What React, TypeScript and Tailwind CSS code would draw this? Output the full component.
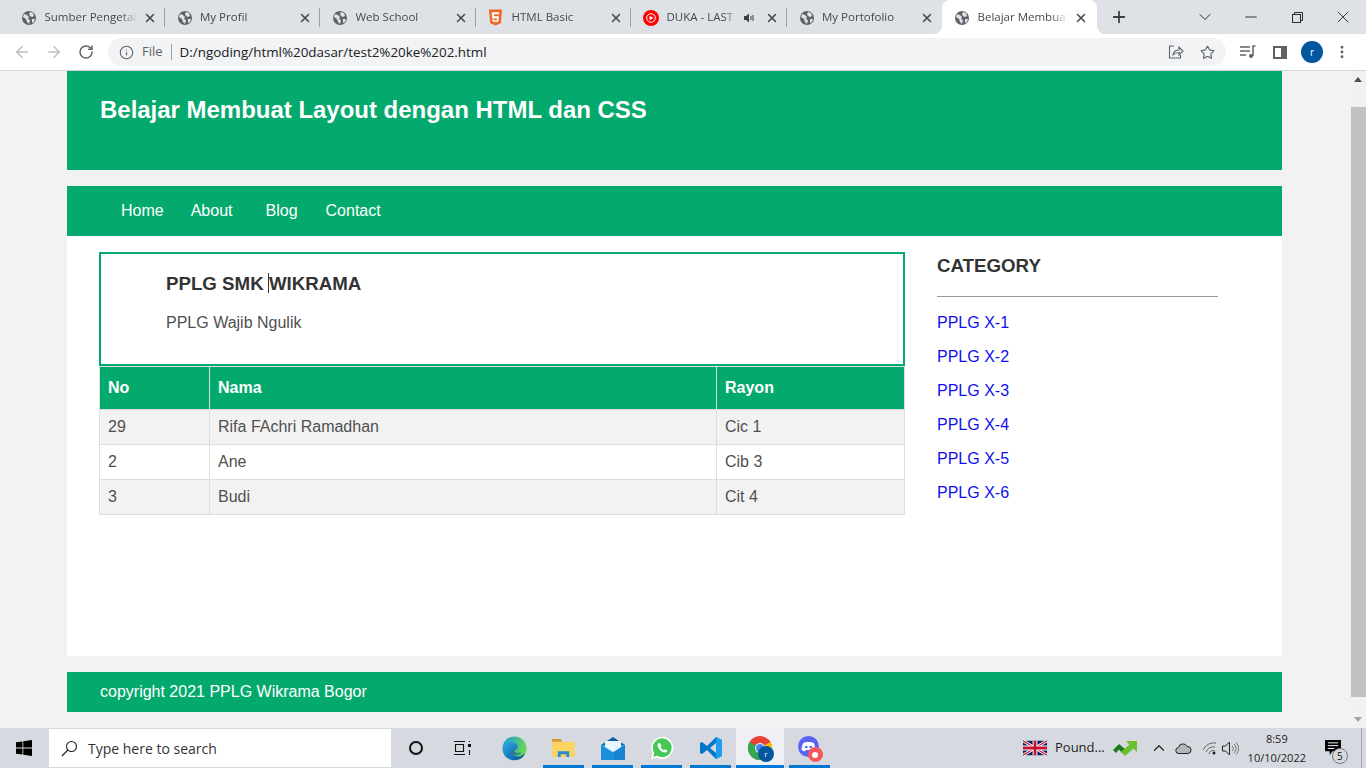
import { X, Plus, ArrowLeft, ArrowRight, RotateCw, Info, Star, Minus, ChevronDown, ChevronUp, MoreVertical } from "lucide-react";

const ui = "font-['Open_Sans',sans-serif]";

function Globe() {
    return (
        <svg width="16" height="16" viewBox="0 0 16 16" className="shrink-0">
            <circle cx="8" cy="8" r="7" fill="#5f6368" />
            <path d="M3 4l3 1 2 2-1 2 2 1-1 4-2-2-1-3-3-2zM9 2l3 1 1 3-2 1-2-1-1-2zM11 9l3 0-1 3-2 1z" fill="#dee1e6" />
        </svg>
    );
}

function Html5() {
    return (
        <svg width="15" height="17" viewBox="0 0 16 17" className="mr-[1.5px] shrink-0">
            <path d="M1 0h14l-1.300 14.500L8 17l-5.700-2.500z" fill="#f1662a" />
            <path d="M4 3h8l-.2 2H6.300l.2 2.200h5.100l-.5 5.300L8 13.500l-3.100-1-.2-2.200h1.800l.1 1 1.400.4 1.400-.4.2-1.800H4.500z" fill="#fff" />
        </svg>
    );
}

function YtMusic() {
    return (
        <svg width="16" height="16" viewBox="0 0 16 16" className="shrink-0">
            <circle cx="8" cy="8" r="8" fill="#f00" />
            <circle cx="8" cy="8" r="4.300" fill="none" stroke="#fff" strokeWidth="1" />
            <path d="M6.500 5.800L10.500 8l-4 2.200z" fill="#fff" />
        </svg>
    );
}

function Speaker() {
    return (
        <svg width="12" height="12" viewBox="0 0 12 12" className="shrink-0">
            <path d="M1 4h2l3-2.500v9L3 8H1z" fill="#3c4043" />
            <path d="M8 4v4M10 3v6" stroke="#3c4043" strokeWidth="1" />
        </svg>
    );
}

type TabProps = { title: string; icon?: React.ReactNode; audio?: boolean; sep?: boolean };

function Tab({ title, icon, audio, sep = true }: TabProps) {
    return (
        <div className="relative flex h-[34px] w-[155.5px] shrink-0 items-center pl-[12px] pr-[8px] pt-[1px]">
            {icon ?? <Globe />}
            <span className={`mb-[1px] ml-[7.5px] min-w-0 flex-1 overflow-hidden whitespace-nowrap text-[11.5px] text-[#45494e] ${ui} [mask-image:linear-gradient(90deg,#000_82%,transparent)]`}>{title}</span>
            {audio && <span className="ml-[6px] mr-[4px]"><Speaker /></span>}
            <X size={14} strokeWidth={2.6} className="ml-[6px] shrink-0 text-[#45494e]" />
            {sep && <span className="absolute right-0 top-[8px] h-[19px] w-px bg-[#9aa0a6]" />}
        </div>
    );
}

function TabStrip() {
    return (
        <div className="flex h-[34px] shrink-0 items-center bg-[#dee1e6] pl-[9px]">
            <Tab title="Sumber Pengetahuan" />
            <Tab title="My Profil" />
            <Tab title="Web School" />
            <Tab title="HTML Basic" icon={<Html5 />} />
            <Tab title="DUKA - LAST CHILD" icon={<YtMusic />} audio />
            <Tab title="My Portofolio" sep={false} />
            <div className="relative flex h-[34px] w-[155px] shrink-0 items-center rounded-t-[8px] bg-white pl-[12px] pr-[9px] pt-[1px]">
                <span className="absolute bottom-0 left-[-8px] h-[8px] w-[8px] bg-white"><span className="block h-full w-full rounded-br-[8px] bg-[#dee1e6]" /></span>
                <span className="absolute bottom-0 right-[-8px] h-[8px] w-[8px] bg-white"><span className="block h-full w-full rounded-bl-[8px] bg-[#dee1e6]" /></span>
                <Globe />
                <span className={`mb-[1px] ml-[7.5px] min-w-0 flex-1 overflow-hidden whitespace-nowrap text-[11.5px] text-[#45494e] ${ui} [mask-image:linear-gradient(90deg,#000_82%,transparent)]`}>Belajar Membuat Layout</span>
                <X size={14} strokeWidth={2.6} className="ml-[6px] shrink-0 text-[#45494e]" />
            </div>
            <Plus size={18} strokeWidth={2.4} className="ml-[13px] text-[#3c4043]" />
            <div className="ml-auto flex items-center text-[#2b2e31]">
                <div className="flex w-[46px] justify-center"><ChevronDown size={20} strokeWidth={1.2} /></div>
                <div className="flex w-[46px] justify-center"><Minus size={18} strokeWidth={1.3} /></div>
                <div className="flex w-[46px] justify-center">
                    <svg width="11" height="11" viewBox="0 0 11 11" fill="none" stroke="#2b2e31">
                        <rect x=".5" y="2.500" width="8" height="8" />
                        <path d="M2.500 2.500v-2h8v8h-2" />
                    </svg>
                </div>
                <div className="flex w-[46px] justify-center"><X size={20} strokeWidth={1.1} /></div>
            </div>
        </div>
    );
}

function Toolbar() {
    return (
        <div className="flex h-[37px] shrink-0 items-center border-b border-[#d5d6d8] bg-white">
            <ArrowLeft size={18} strokeWidth={2} className="ml-[13px] text-[#bdc0c4]" />
            <ArrowRight size={18} strokeWidth={2} className="ml-[14px] text-[#bdc0c4]" />
            <RotateCw size={16} strokeWidth={2.2} className="ml-[15px] text-[#5f6368]" />
            <div className="ml-[14px] flex h-[28px] w-[1118px] shrink-0 items-center rounded-full bg-[#f1f3f4] pl-[11px]">
                <Info size={15} strokeWidth={1.8} className="text-[#5f6368]" />
                <span className={`ml-[8px] text-[13px] text-[#5f6368] ${ui}`}>File</span>
                <span className="ml-[8px] h-[16px] w-px bg-[#9aa0a6]" />
                <span className={`ml-[8px] text-[13.4px] text-[#202124] ${ui}`}>D:/ngoding/html%20dasar/test2%20ke%202.html</span>
                <svg width="16" height="16" viewBox="0 0 16 16" fill="none" stroke="#5f6368" strokeWidth="1.100" className="ml-auto mr-[8px]">
                    <path d="M6 2H1.500v12h11v-3" />
                    <path d="M5 11c.5-3.500 3-5 6-5V3l4 4-4 4V8.500c-2.500 0-4.500.8-6 2.500z" />
                </svg>
                <Star size={15} strokeWidth={1.8} className="ml-[8px] mr-[11px] text-[#5f6368]" />
            </div>
            <svg width="16" height="14" viewBox="0 0 16 14" fill="none" stroke="#5f6368" strokeWidth="1.500" className="ml-[14px]">
                <path d="M0 2h10M0 6h10M0 10h6M13 1v10" />
                <circle cx="11" cy="11" r="2" fill="#5f6368" stroke="none" />
                <path d="M12.500 1h3" />
            </svg>
            <svg width="14" height="13" viewBox="0 0 14 13" className="ml-[17px]">
                <path d="M0 0h14v13H0z M2 2v9h6V2z" fill="#5f6368" fillRule="evenodd" />
            </svg>
            <div className={`ml-[14px] flex h-[22px] w-[22px] items-center justify-center rounded-full bg-[#04579f] text-[10px] text-white ${ui}`}>r</div>
            <MoreVertical size={16} strokeWidth={2.4} className="ml-[11px] text-[#5f6368]" />
        </div>
    );
}

const links = ["PPLG X-1", "PPLG X-2", "PPLG X-3", "PPLG X-4", "PPLG X-5", "PPLG X-6"];
const rows = [
    ["29", "Rifa FAchri Ramadhan", "Cic 1"],
    ["2", "Ane", "Cib 3"],
    ["3", "Budi", "Cit 4"],
];

function Page() {
    return (
        <div className="flex min-h-0 flex-1 bg-[#f2f2f2]">
            <div className="flex-1 overflow-hidden pl-[67px] pr-[68px] font-['Liberation_Sans',sans-serif] text-[#505050]">
                <header className="h-[99px] bg-[#04aa6d] pl-[33px] pt-[24px]">
                    <h1 className="text-[24px] leading-[30px] font-bold tracking-[-0.02px] text-white">Belajar Membuat Layout dengan HTML dan CSS</h1>
                </header>
                <nav className="mt-[16px] flex h-[50px] items-center bg-[#04aa6d] text-[16px] text-white">
                    <a className="ml-[54px]">Home</a>
                    <a className="ml-[27px]">About</a>
                    <a className="ml-[33px]">Blog</a>
                    <a className="ml-[28px]">Contact</a>
                </nav>
                <main className="flex h-[420px] bg-white pl-[32px] pt-[16px]">
                    <div className="w-[806px]">
                        <div className="h-[114px] border-2 border-[#04aa6d] pl-[65px] pt-[18px]">
                            <h2 className="relative text-[18.72px] leading-[24px] font-bold text-[#333]">
                                PPLG SMK WIKRAMA
                                <span className="absolute left-[102px] top-[1px] h-[20px] w-px bg-[#333]" />
                            </h2>
                            <p className="mt-[15px] text-[16px] leading-[24px]">PPLG Wajib Ngulik</p>
                        </div>
                        <table className="w-full table-fixed border-collapse text-[16px]">
                            <colgroup>
                                <col className="w-[110px]" />
                                <col className="w-[507px]" />
                                <col />
                            </colgroup>
                            <thead>
                                <tr className="h-[43px] bg-[#04aa6d] text-left text-white">
                                    <th className="border border-[#ddd] pl-[8px] font-bold">No</th>
                                    <th className="border border-[#ddd] pl-[8px] font-bold">Nama</th>
                                    <th className="border border-[#ddd] pl-[8px] font-bold">Rayon</th>
                                </tr>
                            </thead>
                            <tbody>
                                {rows.map((row, i) => (
                                    <tr key={row[0]} className={`h-[35px] ${i % 2 == 0 ? "bg-[#f2f2f2]" : "bg-white"}`}>
                                        {row.map((cell) => (
                                            <td key={cell} className="border border-[#ddd] pl-[8px]">{cell}</td>
                                        ))}
                                    </tr>
                                ))}
                            </tbody>
                        </table>
                    </div>
                    <aside className="ml-[32px] w-[281px]">
                        <h3 className="mt-[2px] text-[18.72px] leading-[24px] font-bold text-[#333]">CATEGORY</h3>
                        <hr className="mt-[18px] border-t border-[#999]" />
                        <ul className="mt-[9px]">
                            {links.map((link) => (
                                <li key={link} className="h-[34px] text-[16px] leading-[34px] text-[#1010ee]">{link}</li>
                            ))}
                        </ul>
                    </aside>
                </main>
                <footer className="mt-[16px] flex h-[40px] items-center bg-[#04aa6d] pl-[33px] text-[16px] text-white">copyright 2021 PPLG Wikrama Bogor</footer>
            </div>
            <div className="flex w-[16px] shrink-0 flex-col items-center bg-[#f1f1f1]">
                <svg width="8" height="5" viewBox="0 0 8 5" className="mt-[6px]"><path d="M4 0l4 5H0z" fill="#505050" /></svg>
                <div className="mt-[25px] h-[590px] w-[15px] bg-[#c1c1c1]" />
                <svg width="8" height="5" viewBox="0 0 8 5" className="mt-[20px]"><path d="M4 5L0 0h8z" fill="#a3a3a3" /></svg>
            </div>
        </div>
    );
}

function Underlined({ children, active, on = true }: { children: React.ReactNode; active?: boolean; on?: boolean }) {
    return (
        <div className={`relative flex h-[40px] shrink-0 items-center justify-center ${active ? "w-[48px] bg-[#eef0f3]" : "w-[49px]"}`}>
            {children}
            {on && <span className={`absolute bottom-0 h-[3px] bg-[#0078d4] ${active ? "inset-x-0" : "inset-x-[4px]"}`} />}
        </div>
    );
}

function Taskbar() {
    return (
        <div className="flex h-[40px] shrink-0 items-center bg-[#d6dae0]">
            <svg width="16" height="16" viewBox="0 0 16 16" className="ml-[16px] shrink-0">
                <path d="M0 2.300l6.500-.9v6.200H0zM7.300 1.300L16 0v7.600H7.300zM0 8.400h6.500v6.200L0 13.700zM7.300 8.400H16V16l-8.700-1.300z" fill="#000" />
            </svg>
            <div className="ml-[17px] flex h-[38px] w-[342px] shrink-0 items-center bg-white pl-[12px]">
                <svg width="17" height="17" viewBox="0 0 17 17" fill="none" stroke="#222" strokeWidth="1.100">
                    <circle cx="10.500" cy="6.500" r="5" />
                    <path d="M6.800 10L1 16" />
                </svg>
                <span className={`ml-[10px] text-[14px] text-[#333] ${ui}`}>Type here to search</span>
            </div>
            <svg width="16" height="16" viewBox="0 0 16 16" fill="none" stroke="#111" strokeWidth="2" className="ml-[17px] shrink-0"><circle cx="8" cy="8" r="6" /></svg>
            <svg width="17" height="16" viewBox="0 0 17 16" fill="none" stroke="#111" strokeWidth="1.100" className="ml-[30px] shrink-0">
                <path d="M0 1.500h11M0 14.500h11M1.500 4.500h8v7h-8z M15.500 1v1M15.500 10v5" />
                <rect x="14" y="4" width="3" height="3" fill="#111" stroke="none" />
            </svg>
            <div className="ml-[19px] flex shrink-0 items-center">
                <Underlined on={false}>
                    <svg width="25" height="25" viewBox="0 0 26 26">
                        <defs>
                            <linearGradient id="edgeA" x1="0" y1="0" x2="1" y2="1"><stop offset="0" stopColor="#2ea8e4" /><stop offset="1" stopColor="#0c4f9c" /></linearGradient>
                            <linearGradient id="edgeB" x1="0" y1="0.300" x2="1" y2="0.600"><stop offset="0" stopColor="#1b9de2" /><stop offset="1" stopColor="#6fdc4c" /></linearGradient>
                        </defs>
                        <circle cx="13" cy="13" r="12.500" fill="url(#edgeB)" />
                        <path d="M1 14c1-6 7-9 12-7 4 2 4 6 2 7-2 1-6 0-6 3 0 3 6 5 10 4 2-.5 4-2 5-3-2 5-6 7-11 7C6 25 1 20 1 14z" fill="url(#edgeA)" />
                        <path d="M15 14c-2 1-6 0-6 3 0 1 .5 2 1.500 2.500 4 1.500 8 .5 10-2.500-1 .5-5 1-7 0-1.500-1-.5-2 1.500-3z" fill="#173f8f" opacity=".55" />
                    </svg>
                </Underlined>
                <Underlined>
                    <svg width="23" height="18" viewBox="0 0 24 19" className="mb-[1px]">
                        <path d="M0 0h9l2 3H0z" fill="#d9962a" />
                        <path d="M0 3h24v16H0z" fill="#fcd462" />
                        <path d="M6 13h12v6h-3v-3H9v3H6z" fill="#2a8ad4" />
                    </svg>
                </Underlined>
                <Underlined>
                    <svg width="24" height="23" viewBox="0 0 24 23">
                        <path d="M0 8L12 0l12 8v2H0z" fill="#0a5ea8" />
                        <rect y="8" width="24" height="15" fill="#38a9ee" />
                        <path d="M0 8l12 8 12-8v15H0z" fill="#1a8fdc" />
                        <path d="M12 16L24 8v15H14z" fill="#1276c4" opacity=".5" />
                        <path d="M4 4h16v6l-8 5-8-5z" fill="#e9f5fd" />
                    </svg>
                </Underlined>
                <Underlined>
                    <svg width="24" height="24" viewBox="0 0 24 24">
                        <path d="M1 23l1.600-6A11 11 0 1 1 7 21.400z" fill="#fff" />
                        <path d="M3.300 20.700l1-3.900A9.400 9.400 0 1 1 7.400 19.800z" fill="#46c756" />
                        <path d="M9 7c-.5 0-1.400.8-1.400 2.300 0 3 3.800 7 7.300 7.300 1.500 0 2.500-1 2.500-2l-2.400-1.300-1 1c-1.500-.4-3-2-3.500-3.500l1-1L10 7z" fill="#fff" />
                    </svg>
                </Underlined>
                <Underlined>
                    <svg width="24" height="24" viewBox="0 0 24 24">
                        <path d="M17 1l6 3v16l-6 3-9-9-5 4-2-1V7l2-1 5 4zM17 7l-6 5 6 5z" fill="#0078c8" />
                        <path d="M17 1l6 3v16l-6 3z" fill="#1f9cf0" />
                    </svg>
                </Underlined>
                <div className="w-[1px]" />
                <Underlined active>
                    <div className="relative h-[24px] w-[24px]">
                        <svg width="24" height="24" viewBox="0 0 24 24">
                            <circle cx="12" cy="12" r="12" fill="#ea4335" />
                            <path d="M12 12L1.600 6A12 12 0 0 0 12 24z" fill="#34a853" />
                            <path d="M12 12l10.400-6A12 12 0 0 1 12 24z" fill="#fbbc05" />
                            <circle cx="12" cy="12" r="5" fill="#fff" />
                            <circle cx="12" cy="12" r="4" fill="#4285f4" />
                        </svg>
                        <span className={`absolute left-[10px] top-[10px] flex h-[16px] w-[16px] items-center justify-center rounded-full bg-[#04579f] text-[8px] text-white ${ui}`}>r</span>
                    </div>
                </Underlined>
                <div className="w-[1px]" />
                <Underlined>
                    <div className="relative h-[24px] w-[22px] -translate-x-[1px]">
                        <svg width="21" height="21" viewBox="0 0 24 24">
                            <circle cx="12" cy="12" r="12" fill="#5865f2" />
                            <path d="M6 8c3-1.500 9-1.500 12 0 1 2 2 5 2 8-1.500 1-3 1.500-4 1.500l-1-1.500H9l-1 1.500c-1 0-2.500-.5-4-1.500 0-3 1-6 2-8z" fill="#fff" />
                            <circle cx="9.500" cy="12.500" r="1.500" fill="#5865f2" />
                            <circle cx="14.500" cy="12.500" r="1.500" fill="#5865f2" />
                        </svg>
                        <span className="absolute left-[10px] top-[11px] flex h-[15px] w-[15px] items-center justify-center rounded-full bg-[#f4575c]">
                            <span className="block h-[6px] w-[6px] rounded-full bg-[#fff]" />
                        </span>
                    </div>
                </Underlined>
            </div>
            <svg width="24" height="18" viewBox="0 0 60 36" className="ml-[189px] shrink-0">
                <rect width="60" height="36" fill="#012169" />
                <path d="M0 0l60 36M60 0L0 36" stroke="#fff" strokeWidth="7" />
                <path d="M0 0l60 36M60 0L0 36" stroke="#c8102e" strokeWidth="3" />
                <path d="M30 0v36M0 18h60" stroke="#fff" strokeWidth="12" />
                <path d="M30 0v36M0 18h60" stroke="#c8102e" strokeWidth="7" />
            </svg>
            <span className={`ml-[8px] shrink-0 text-[13px] text-[#222] ${ui}`}>Pound...</span>
            <svg width="24" height="16" viewBox="0 0 24 16" className="ml-[8px] shrink-0">
                <path d="M0 10L6 4l6 5-3 4-3-3.500L3 13z" fill="#1d7a1d" />
                <path d="M13 1h11v11l-3.500-3.500L12 16l-4-4 8.500-7.500z" fill="#6cc02c" />
            </svg>
            <ChevronUp size={18} strokeWidth={1.6} className="ml-[13px] shrink-0 text-[#222]" />
            <svg width="17" height="11" viewBox="0 0 17 11" className="ml-[7px] shrink-0">
                <path d="M4 10.500a3 3 0 0 1-.500-6 4.500 4.500 0 0 1 8.500-1 3.500 3.500 0 0 1 1 7z" fill="#b4b7ba" stroke="#222" strokeWidth="1" />
            </svg>
            <svg width="15" height="13" viewBox="0 0 15 13" fill="none" stroke="#666" strokeWidth="1" className="ml-[10px] shrink-0">
                <path d="M1 8A12 12 0 0 1 14 1M4 10a8 8 0 0 1 9-5M7 12a4 4 0 0 1 6-3" />
                <circle cx="12" cy="11" r="1.500" fill="#222" stroke="none" />
            </svg>
            <svg width="17" height="15" viewBox="0 0 17 15" fill="none" stroke="#222" strokeWidth="1" className="ml-[5px] shrink-0">
                <path d="M.5 5h3L7.500 1v13l-4-4h-3z" />
                <path d="M10 5a3 3 0 0 1 0 5M12 3a6 6 0 0 1 0 9M14 1.500a8 8 0 0 1 0 12" stroke="#777" />
            </svg>
            <div className={`ml-[2px] flex w-[72px] shrink-0 flex-col items-center text-[11px] leading-[19px] text-[#222] ${ui}`}>
                <span>8:59</span>
                <span>10/10/2022</span>
            </div>
            <div className="relative ml-[11px] h-[22px] w-[22px] shrink-0">
                <svg width="16" height="15" viewBox="0 0 17 16" className="absolute left-[1px] top-[3px]">
                    <path d="M0 0h17v12H8l-3 4v-4H0z" fill="#000" />
                    <path d="M3 3h11M3 6h11M3 9h7" stroke="#fff" strokeWidth="1" />
                </svg>
                <span className={`absolute left-[8px] top-[11px] flex h-[16px] w-[16px] items-center justify-center rounded-full border border-[#777] bg-[#d6dae0] text-[10px] text-[#111] ${ui}`}>5</span>
            </div>
            <span className="ml-auto mr-[4px] h-[40px] w-px bg-[#a9adb2]" />
        </div>
    );
}

export default function App() {
    return (
        <div className="flex h-[768px] w-[1366px] flex-col overflow-hidden">
            <TabStrip />
            <Toolbar />
            <Page />
            <Taskbar />
        </div>
    );
}
